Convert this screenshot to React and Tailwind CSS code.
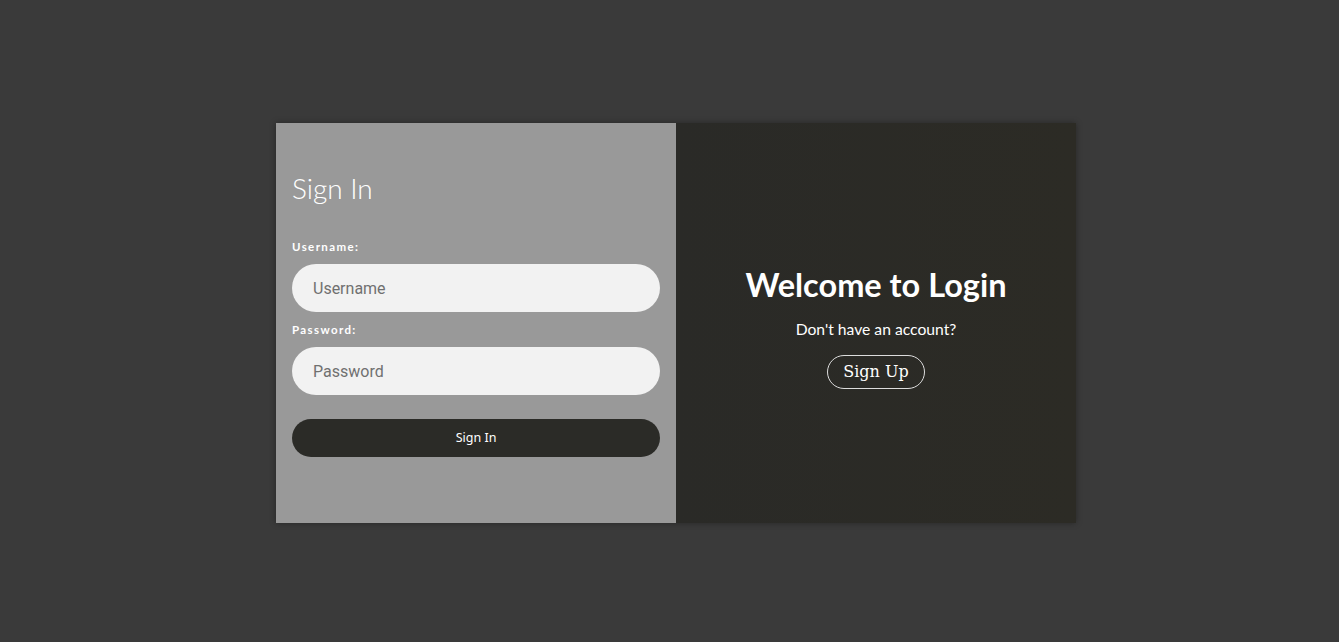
export default function App() {
  return (
    <div className="flex min-h-screen items-center justify-center bg-[#3a3a3a]">
      <div className="ml-[13px] mt-[4px] flex h-[400px] w-[800px] shadow-[0_0_6px_rgba(0,0,0,0.35)]">
        <div className="flex w-[400px] flex-col bg-[#999999] px-4 pt-[49px]">
          <h2 className="font-['Lato',sans-serif] text-[28px] font-light leading-[32px] text-white">Sign In</h2>
          <form className="mt-[35px] flex flex-col" onSubmit={(e) => e.preventDefault()}>
            <label className="font-['Lato',sans-serif] text-[11.5px] font-bold leading-[16px] tracking-[0.12em] text-white">
              Username:
            </label>
            <input
              className="mt-[9px] h-[48px] rounded-full bg-[#f2f2f2] px-[21px] font-['Roboto',sans-serif] text-[16px] text-[#444] outline-none placeholder:text-[#707070]"
              placeholder="Username"
            />
            <label className="mt-[10px] font-['Lato',sans-serif] text-[11.5px] font-bold leading-[16px] tracking-[0.12em] text-white">
              Password:
            </label>
            <input
              type="password"
              className="mt-[9px] h-[48px] rounded-full bg-[#f2f2f2] px-[21px] font-['Roboto',sans-serif] text-[16px] text-[#444] outline-none placeholder:text-[#707070]"
              placeholder="Password"
            />
            <button className="mt-[24px] h-[38px] rounded-full bg-[#2b2b27] font-['Noto_Sans',sans-serif] text-[12.5px] text-white">
              Sign In
            </button>
          </form>
        </div>
        <div className="flex w-[400px] flex-col items-center bg-gradient-to-r from-[#2a2a27] to-[#2c2b25] pt-[142px]">
          <h1 className="font-['Lato',sans-serif] text-[32.5px] font-bold leading-[40px] text-white">Welcome to Login</h1>
          <p className="mt-[14px] font-['Lato',sans-serif] text-[15.7px] leading-[20px] text-white">Don't have an account?</p>
          <button className="mt-[16px] h-[34px] w-[98px] rounded-full border border-[#dddddd] font-['DejaVu_Serif',serif] text-[16px] text-white">
            Sign Up
          </button>
        </div>
      </div>
    </div>
  );
}
